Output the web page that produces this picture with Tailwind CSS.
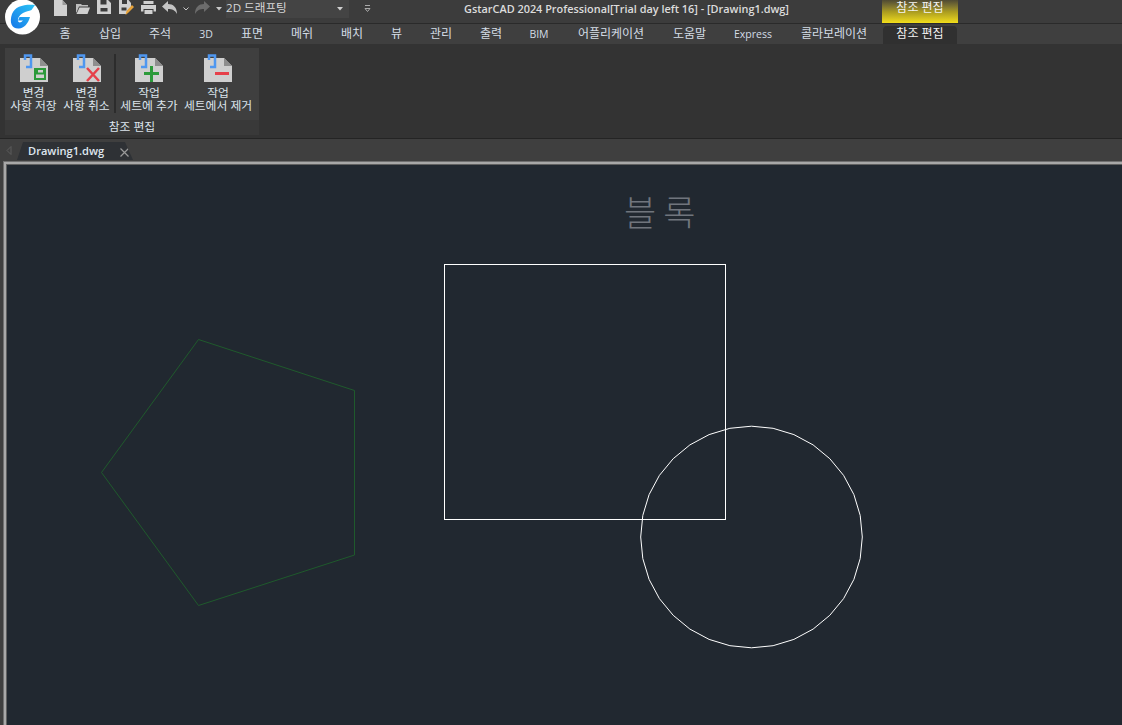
<!DOCTYPE html>
<html lang="ko"><head><meta charset="utf-8">
<script src="https://cdn.jsdelivr.net/npm/@tailwindcss/browser@4"></script></head>
<body class="m-0 overflow-hidden bg-[#333333]">
<div class="w-[1122px] h-[725px] flex flex-col overflow-hidden relative font-['Open_Sans','Noto_Sans_CJK_KR',sans-serif] text-[#e4e4e4]">

<!-- logo -->
<svg class="absolute left-[5px] top-[-1px] z-10" width="36" height="36" viewBox="0 0 36 36">
  <defs><linearGradient id="g" x1="0" y1="1" x2="1" y2="0"><stop offset="0" stop-color="#1677e8"/><stop offset="1" stop-color="#2bc4f5"/></linearGradient></defs>
  <circle cx="17.500" cy="18" r="17.500" fill="#fff"/>
  <path d="M30 6C20 5 10 7 7 15C4 24 7 30 14 29.500C19 29 23 25 25 18L14.500 18L13 21.500L18 21.500C16 24 13.500 24 13 22C12.500 19 15 15.500 18 14C21 12.500 24 12 26.500 11Z" fill="url(#g)"/>
</svg>

<!-- title bar -->
<div class="h-[23px] shrink-0 bg-[#3c3c3c] flex items-start relative">
  <div class="w-[54px] shrink-0"></div>
  <div class="flex items-start h-[20px]">
    <svg width="13" height="16" viewBox="0 0 13 16" class="mr-[8px]"><path d="M0 0H8.500L13 5V16H0Z" fill="#d0d0d0"/><path d="M8.500 0L13 5H8.500Z" fill="#9a9a9a"/></svg>
    <svg width="15" height="11" viewBox="0 0 15 11" class="mt-[3px] mr-[7px]"><path d="M1 1H6L7 2H13V3.500H4L1.500 9.500H1Z" fill="#bdbdbd"/><path d="M4.500 4.500H15L12.500 11H1.500Z" fill="#cfcfcf"/></svg>
    <svg width="14" height="14" viewBox="0 0 14 14" class="mr-[8px]"><path d="M0 0H3.500V4.500H9.500V0H11L14 3V14H0Z" fill="#d0d0d0"/><rect x="3.500" y="8" width="7" height="3.500" fill="#3c3c3c"/></svg>
    <svg width="15" height="15" viewBox="0 0 15 15" class="mr-[7px]"><path d="M0 0H3V4H8V0H9.500L12 3V7L8 11V14H0Z" fill="#d0d0d0"/><rect x="2.500" y="7.500" width="5" height="3" fill="#3c3c3c"/><path d="M13 5L15 7L9 13L6.500 15L7.500 11Z" fill="#e8a33a"/></svg>
    <svg width="15" height="13" viewBox="0 0 15 13" class="mt-[1px] mr-[6px]"><rect x="2.500" y="0" width="10" height="3" fill="#d0d0d0"/><path d="M0 4H15V10.500H12.500V8H2.500V10.500H0Z" fill="#d0d0d0"/><rect x="3.500" y="9" width="8" height="4" fill="#d0d0d0"/></svg>
    <svg width="15" height="13" viewBox="0 0 15 13" class="mt-[1px] mr-[6px]"><path d="M6 0V3C11 3 15 6 15 13C13 9 10 8 6 8V11L0 5.500Z" fill="#c4c4c4"/></svg>
    <svg width="6" height="4" viewBox="0 0 6 4" class="mt-[7px] mr-[6px]"><path d="M0.500 0.500L3 3L5.500 0.500" stroke="#c8c8c8" fill="none"/></svg>
    <svg width="15" height="13" viewBox="0 0 15 13" class="mt-[1px] mr-[6px]"><path d="M9 0V3C4 3 0 6 0 13C2 9 5 8 9 8V11L15 5.500Z" fill="#6c6c6c"/></svg>
    <svg width="6" height="4" viewBox="0 0 6 4" class="mt-[7px]"><path d="M0 0H6L3 3.500Z" fill="#c8c8c8"/></svg>
  </div>
  <div class="ml-[4px] w-[123px] h-[18px] bg-[#444444] flex items-start text-[11.600px] leading-[15px] text-[#d8d8d8] relative">2D 드래프팅
    <svg width="6" height="4" viewBox="0 0 6 4" class="absolute right-[6px] top-[7px]"><path d="M0 0H6L3 3.500Z" fill="#d0d0d0"/></svg>
  </div>
  <svg width="7" height="8" viewBox="0 0 7 8" class="ml-[15px] mt-[5px]"><path d="M1 0.500H6" stroke="#aaa"/><path d="M1 3.500H6L3.500 6.500Z" fill="none" stroke="#aaa"/></svg>
  <div class="absolute left-[464px] top-[1px] text-[10.900px] leading-[16px] font-semibold text-[#dcdcdc] whitespace-nowrap">GstarCAD 2024 Professional[Trial day left 16] - [Drawing1.dwg]</div>
  <div class="absolute left-[882px] top-0 w-[76px] h-[23px] bg-gradient-to-b from-[#4f4a32] via-[#a89a20] to-[#f2de1a] text-center text-[12px] leading-[15px] text-[#f2f2f2]">참조 편집</div>
</div>
<div class="h-px shrink-0 bg-[#2a2a2a]"></div>

<!-- ribbon tabs -->
<div class="h-[20px] shrink-0 bg-[#3f3f3f] flex text-[12px] leading-[19px] text-[#d4dde6] text-center pl-[45px]">
  <div class="w-[40px]">홈</div><div class="w-[50px]">삽입</div><div class="w-[50px]">주석</div><div class="w-[42px] pt-[1px] text-[10.500px]">3D</div><div class="w-[50px]">표면</div><div class="w-[50px]">메쉬</div><div class="w-[50px]">배치</div><div class="w-[39px]">뷰</div><div class="w-[50px]">관리</div><div class="w-[50px]">출력</div><div class="w-[46px] pt-[1px] text-[10.500px]">BIM</div><div class="w-[98px] whitespace-nowrap">어플리케이션</div><div class="w-[59px] whitespace-nowrap">도움말</div><div class="w-[68px] pt-[1px] text-[10.500px]">Express</div><div class="w-[94px] whitespace-nowrap">콜라보레이션</div><div class="w-[2px]"></div><div class="w-[74px] mt-[2px] leading-[16px] bg-[#303030] rounded-t-[4px] text-[#f0f0f0]">참조 편집</div>
</div>

<!-- ribbon -->
<div class="h-[94px] shrink-0 bg-[#333333] pt-[4px] pl-[5px]">
  <div class="w-[254px] h-[87px] flex flex-col">
    <div class="h-[72px] bg-[#3f3f3f] flex text-[11.800px] leading-[13px] text-[#dce4ec] text-center">
      <div class="w-[57px] flex flex-col items-center pt-[6px]">
        <svg width="28" height="28" viewBox="0 0 28 28"><path d="M0 4H20L28 12V28H0Z" fill="#cfcfcf"/><path d="M20 4L28 12H20Z" fill="#8e8e8e"/><path d="M5 6V1.500H11V13H6" fill="none" stroke="#4f97f0" stroke-width="2.500"/><path d="M14 14H26V26H14Z" fill="#2b9a3a"/><rect x="18" y="16" width="5" height="2.500" fill="#cfcfcf"/><rect x="16" y="20.500" width="8" height="3.500" fill="#cfcfcf"/></svg>
        <div class="mt-[4px] whitespace-nowrap">변경<br>사항 저장</div>
      </div>
      <div class="w-[49px] flex flex-col items-center pt-[6px]">
        <svg width="28" height="28" viewBox="0 0 28 28"><path d="M0 4H20L28 12V28H0Z" fill="#cfcfcf"/><path d="M20 4L28 12H20Z" fill="#8e8e8e"/><path d="M5 6V1.500H11V13H6" fill="none" stroke="#4f97f0" stroke-width="2.500"/><path d="M14 14L26 27M26 14L14 27" stroke="#e6404a" stroke-width="2.500"/></svg>
        <div class="mt-[4px] whitespace-nowrap">변경<br>사항 취소</div>
      </div>
      <div class="w-[2px] h-[59px] mt-[6px] bg-[#2c2c2c] ml-[3px] mr-[1px]"></div>
      <div class="w-[64px] flex flex-col items-center pt-[6px]">
        <svg width="28" height="28" viewBox="0 0 28 28"><path d="M0 4H20L28 12V28H0Z" fill="#cfcfcf"/><path d="M20 4L28 12H20Z" fill="#8e8e8e"/><path d="M5 6V1.500H11V13H6" fill="none" stroke="#4f97f0" stroke-width="2.500"/><path d="M9 19.500H24M16.500 12V28" stroke="#2b9a3a" stroke-width="3"/></svg>
        <div class="mt-[4px] whitespace-nowrap">작업<br>세트에 추가</div>
      </div>
      <div class="w-[74px] flex flex-col items-center pt-[6px]">
        <svg width="28" height="28" viewBox="0 0 28 28"><path d="M0 4H20L28 12V28H0Z" fill="#cfcfcf"/><path d="M20 4L28 12H20Z" fill="#8e8e8e"/><path d="M5 6V1.500H11V13H6" fill="none" stroke="#4f97f0" stroke-width="2.500"/><rect x="11" y="18" width="14" height="3" fill="#e6404a"/></svg>
        <div class="mt-[4px] whitespace-nowrap">작업<br>세트에서 제거</div>
      </div>
    </div>
    <div class="h-[15px] bg-[#393939] text-center text-[11.800px] leading-[13px] text-[#dce4ec]">참조 편집</div>
  </div>
</div>
<div class="h-px shrink-0 bg-[#242424]"></div>

<!-- document tabs -->
<div class="h-[22px] shrink-0 bg-[#3f3f3f] flex items-end relative">
  <svg width="6" height="9" viewBox="0 0 6 9" class="absolute left-[6px] top-[7px]"><path d="M5 0.500L1 4.500L5 8.500Z" fill="none" stroke="#5c5c5c"/></svg>
  <div class="ml-[17px] mb-[1px] w-[116px] h-[18px] bg-[#2e3135] [clip-path:polygon(6px_0,108px_0,116px_100%,0_100%)] flex items-center relative">
    <span class="ml-[11px] text-[11.100px] font-semibold text-[#dfe6ee]">Drawing1.dwg</span>
    <svg width="9" height="9" viewBox="0 0 9 9" class="absolute left-[103px] top-[6px]"><path d="M0.500 0.500L8.500 8.500M8.500 0.500L0.500 8.500" stroke="#9a9a9a" stroke-width="1.200"/></svg>
  </div>
</div>

<!-- canvas -->
<div class="flex-1 bg-[#3f3f3f] pl-[3px]">
  <div class="h-full border-l border-t border-[#707070]">
    <div class="h-full border-l-2 border-t-2 border-[#a8a8a8]">
      <div class="h-full border-l border-t border-[#606060] bg-[#212830] relative">
        <svg class="absolute left-[-7px] top-[-165px]" width="1122" height="725" viewBox="0 0 1122 725">
          <rect x="444.500" y="264.500" width="281" height="255" fill="none" stroke="#ffffff"/>
          <polygon fill="none" stroke="#ffffff" points="862.300,537 860.200,558.600 853.900,579.400 843.600,598.600 829.800,615.300 813.100,629.100 793.900,639.400 773.100,645.700 751.500,647.800 729.900,645.700 709.100,639.400 689.900,629.100 673.200,615.300 659.400,598.600 649.100,579.400 642.800,558.600 640.700,537 642.800,515.400 649.100,494.600 659.400,475.400 673.200,458.700 689.900,444.900 709.100,434.600 729.900,428.300 751.500,426.200 773.100,428.300 793.900,434.600 813.100,444.900 829.800,458.700 843.600,475.400 853.900,494.600 860.200,515.400"/>
          <polygon points="198.500,339.500 354.500,390.500 354.500,555 198.500,605.500 101.500,472.500" fill="none" stroke="#1f5a2c"/>
        </svg>
        <div class="absolute left-[617px] top-[24px] text-[35px] leading-[44px] tracking-[7px] font-['Noto_Sans_CJK_KR',sans-serif] font-light text-[#70757d] whitespace-nowrap">블록</div>
      </div>
    </div>
  </div>
</div>
</div>
</body></html>
